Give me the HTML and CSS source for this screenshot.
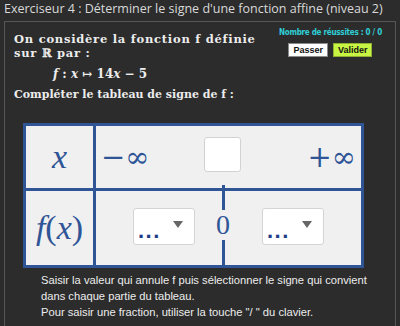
FILE: index.html
```html
<!DOCTYPE html>
<html lang="fr">
<head>
<meta charset="utf-8">
<title>Exerciseur 4</title>
<link rel="stylesheet" href="styles.css">
</head>
<body>
<h1 class="title">Exerciseur 4 : Déterminer le signe d'une fonction affine (niveau 2)</h1>
<div class="panel">
  <div class="top">
    <div class="statement">
      <p class="intro">On considère la fonction f définie</p>
      <p class="intro">sur ℝ par :</p>
      <p class="formula"><i>f</i> : <i>x</i> ↦ 14<i>x</i> − 5</p>
      <p class="ask">Compléter le tableau de signe de f :</p>
    </div>
    <div class="score">
      <div class="count">Nombre de réussites : 0 / 0</div>
      <div class="buttons">
        <span class="btn pass">Passer</span>
        <span class="btn ok">Valider</span>
      </div>
    </div>
  </div>
  <div class="table">
    <div class="head r1"><i>x</i></div>
    <div class="vals r1">
      <span class="inf minus">−∞</span>
      <span class="box"></span>
      <span class="inf plus">+∞</span>
    </div>
    <div class="head r2"><i>f</i>(<i>x</i>)</div>
    <div class="signs r2">
      <div class="sel"><span class="dots">...</span><span class="arrow"></span></div>
      <div class="zero">
        <span class="bar top-bar"></span>
        <span class="digit">0</span>
        <span class="bar bottom-bar"></span>
      </div>
      <div class="sel sel2"><span class="dots">...</span><span class="arrow"></span></div>
    </div>
  </div>
  <div class="help">
    <p>Saisir la valeur qui annule f puis sélectionner le signe qui convient<br>dans chaque partie du tableau.</p>
    <p>Pour saisir une fraction, utiliser la touche "/ " du clavier.</p>
  </div>
</div>
</body>
</html>
```
FILE: styles.css
```css
html, body {
  margin: 0;
  padding: 0;
  background: #2c2c2c;
  height: 100%;
  overflow: hidden;
}

.title {
  margin: 0;
  padding-left: 4px;
  font-family: "Open Sans", sans-serif;
  font-weight: 400;
  font-size: 12.5px;
  line-height: 18px;
  color: #d9d9d9;
  white-space: nowrap;
}

.panel {
  margin: 3px 4px 0 4px;
  border: 1px solid #565656;
  border-bottom: none;
  height: 320px;
  box-sizing: border-box;
}

.top {
  display: flex;
  justify-content: space-between;
}

.statement {
  margin: 10px 0 0 9px;
  width: 262px;
  flex-shrink: 0;
  font-family: "DejaVu Serif", serif;
  font-weight: bold;
  font-size: 11.5px;
  line-height: 14px;
  color: #ececec;
}

.statement p {
  margin: 0;
}

.intro {
  letter-spacing: 0.75px;
  white-space: nowrap;
}

.formula {
  padding-left: 39px;
  margin-top: 7px !important;
  font-size: 12px;
}

.ask {
  margin-top: 7px !important;
  font-size: 11px;
}

.score {
  margin: 6px 13px 0 0;
  display: flex;
  flex-direction: column;
  align-items: center;
  flex-shrink: 0;
}

.count {
  font-family: "DejaVu Sans Condensed", "Liberation Sans Narrow", sans-serif;
  font-weight: bold;
  font-size: 8px;
  letter-spacing: -0.25px;
  line-height: 10px;
  color: #2fcfd6;
  white-space: nowrap;
}

.buttons {
  display: flex;
  gap: 5px;
  margin-top: 5px;
}

.btn {
  font-family: "Liberation Sans", Arial, sans-serif;
  font-weight: bold;
  font-size: 9px;
  line-height: 10px;
  color: #111;
  padding: 1px 4px;
  border: 1px solid #8a8a8a;
}

.pass {
  background: #ffffff;
}

.ok {
  background: #c8f544;
  border-color: #8fb030;
}

.table {
  margin: 21px 0 0 18px;
  width: 335px;
  border: 3px solid #2f5597;
  background: #f0f0f0;
  display: grid;
  grid-template-columns: 70px 1fr;
  grid-template-rows: 65px 74px;
  color: #2f5597;
}

.head {
  border-right: 3px solid #2f5597;
  display: flex;
  align-items: center;
  justify-content: center;
  font-family: "Liberation Serif", serif;
  font-size: 34px;
}

.r1 {
  border-bottom: 3px solid #2f5597;
}

.vals {
  display: grid;
  grid-template-columns: 108px 37px 1fr;
  align-items: center;
  font-family: "DejaVu Serif", serif;
  font-size: 29px;
}

.inf {
  line-height: 30px;
}

.minus {
  padding-left: 5px;
}

.plus {
  justify-self: end;
  padding-right: 5px;
}

.box {
  width: 35px;
  height: 33px;
  background: #ffffff;
  border: 1px solid #d2d2d2;
  border-radius: 3px;
  margin-top: -6px;
}

.signs {
  display: flex;
  align-items: center;
}

.sel {
  width: 60px;
  height: 35px;
  margin-left: 37px;
  background: #ffffff;
  border: 1px solid #d4d4d4;
  border-radius: 3px;
  display: flex;
  align-items: center;
  margin-top: -3px;
}

.sel2 {
  margin-left: 31px;
}

.dots {
  font-family: "Liberation Sans", sans-serif;
  font-weight: bold;
  font-size: 22px;
  line-height: 20px;
  color: #1e3a8a;
  margin: 8px 0 0 4px;
  letter-spacing: 1.5px;
}

.arrow {
  width: 0;
  height: 0;
  border-left: 5px solid transparent;
  border-right: 5px solid transparent;
  border-top: 7px solid #666;
  margin: -4px 0 0 12px;
}

.zero {
  width: 16px;
  margin-left: 20px;
  align-self: stretch;
  display: flex;
  flex-direction: column;
  align-items: center;
}

.bar {
  width: 3px;
  background: #2f5597;
  flex: 1;
}

.top-bar {
  margin-top: -6px;
}

.digit {
  font-family: "Liberation Serif", serif;
  font-size: 28px;
  line-height: 30px;
}

.help {
  margin: 4px 0 0 36px;
  font-family: "Liberation Sans", Arial, sans-serif;
  font-size: 11.2px;
  line-height: 16px;
  color: #ededed;
}

.help p {
  margin: 0;
}
```
